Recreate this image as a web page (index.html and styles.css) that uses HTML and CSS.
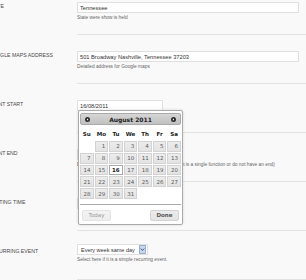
FILE: index.html
```html
<!DOCTYPE html>
<html lang="en">

<head>
    <meta charset="UTF-8">
    <meta name="viewport" content="width=device-width, initial-scale=1.0">
    <title>Edit Show</title>
    <link rel="stylesheet" href="styles.css">
</head>

<body>
    <div class="form">
        <div class="row">
            <div class="label">State</div>
            <div class="field">
                <input class="text wide" type="text" value="Tennessee">
                <p class="desc">State were show is held</p>
            </div>
        </div>

        <div class="row">
            <div class="label">Google Maps Address</div>
            <div class="field">
                <input class="text wide" type="text" value="501 Broadway Nashville, Tennessee 37203">
                <p class="desc">Detailed address for Google maps</p>
            </div>
        </div>

        <div class="row">
            <div class="label">Event Start</div>
            <div class="field">
                <input class="text date" type="text" value="16/08/2011">

                <div class="datepicker">
                    <div class="dp-header">
                        <span class="dp-nav">
                            <svg width="5" height="5" viewBox="0 0 10 10"><circle cx="5" cy="5" r="5" fill="#2b2b2b"/><path d="M6.3 2.6 L3.4 5 L6.3 7.4 Z" fill="#fff"/></svg>
                        </span>
                        <span class="dp-title">August 2011</span>
                        <span class="dp-nav">
                            <svg width="5" height="5" viewBox="0 0 10 10"><circle cx="5" cy="5" r="5" fill="#2b2b2b"/><path d="M3.7 2.6 L6.6 5 L3.7 7.4 Z" fill="#fff"/></svg>
                        </span>
                    </div>

                    <div class="dp-week">
                        <span>Su</span><span>Mo</span><span>Tu</span><span>We</span><span>Th</span><span>Fr</span><span>Sa</span>
                    </div>

                    <div class="dp-days">
                        <span class="empty"></span>
                        <span class="day">1</span><span class="day">2</span><span class="day">3</span><span class="day">4</span><span class="day">5</span><span class="day">6</span>
                        <span class="day">7</span><span class="day">8</span><span class="day">9</span><span class="day">10</span><span class="day">11</span><span class="day">12</span><span class="day">13</span>
                        <span class="day">14</span><span class="day">15</span><span class="day active">16</span><span class="day">17</span><span class="day">18</span><span class="day">19</span><span class="day">20</span>
                        <span class="day">21</span><span class="day">22</span><span class="day">23</span><span class="day">24</span><span class="day">25</span><span class="day">26</span><span class="day">27</span>
                        <span class="day">28</span><span class="day">29</span><span class="day">30</span><span class="day">31</span>
                    </div>

                    <div class="dp-buttons">
                        <span class="dp-btn secondary">Today</span>
                        <span class="dp-btn primary">Done</span>
                    </div>
                </div>
            </div>
        </div>

        <div class="row">
            <div class="label">Event End</div>
            <div class="field">
                <input class="text date" type="text" value="">
                <p class="desc">Date when the event ends, leave blank if the event is a single function or do not have an end)</p>
            </div>
        </div>

        <div class="row">
            <div class="label">Meeting Time</div>
            <div class="field">
                <input class="text time" type="text" value="">
            </div>
        </div>

        <div class="row row-select">
            <div class="label">Recurring Event</div>
            <div class="field">
                <div class="select">
                    <span>Every week same day</span>
                    <svg class="select-arrow" width="7" height="9" viewBox="0 0 7 9">
                        <rect x="0.5" y="0.5" width="6" height="8" fill="#c9d5e8" stroke="#9aaed0"/>
                        <path d="M1.8 3.6 L3.5 5.4 L5.2 3.6" fill="none" stroke="#3c5a8c" stroke-width="1"/>
                    </svg>
                </div>
                <p class="desc">Select here if it is a simple recurring event.</p>
            </div>
        </div>
    </div>
</body>

</html>
```

FILE: styles.css
```css
body {
    margin: 0;
    background-color: #f9f9f9;
    font-family: "Liberation Sans", Arial, sans-serif;
    overflow: hidden;
}

.form {
    margin: -14px 0 0 -12px;
}

.row {
    display: flex;
    height: 49px;
}

.label {
    width: 89px;
    flex-shrink: 0;
    padding-top: 17px;
    font-size: 5.2px;
    text-transform: uppercase;
    color: #4a4a4a;
}

.field {
    flex: 1;
    box-sizing: border-box;
    position: relative;
    padding-top: 16px;
    border-bottom: 1px solid #e2e2e2;
}

.row-select .field {
    padding-top: 13px;
}

.text {
    display: block;
    box-sizing: border-box;
    height: 11px;
    margin: 0;
    padding: 0 2px;
    border: 1px solid #dfdfdf;
    background-color: #fff;
    font-family: "Liberation Sans", Arial, sans-serif;
    font-size: 5.7px;
    color: #333;
    outline: none;
}

.wide {
    width: 222px;
}

.date {
    width: 86px;
}

.time {
    width: 60px;
}

.desc {
    margin: 2px 0 0;
    font-size: 4.8px;
    color: #666;
    white-space: nowrap;
}

.select {
    display: flex;
    align-items: center;
    justify-content: space-between;
    box-sizing: border-box;
    width: 71px;
    height: 11px;
    padding: 0 1px 0 3px;
    border: 1px solid #dfdfdf;
    background-color: #fff;
    font-size: 5.5px;
    color: #333;
}

.select-arrow {
    display: block;
}

/* datepicker */

.datepicker {
    position: absolute;
    z-index: 10;
    left: 1px;
    top: 26px;
    width: 105px;
    box-sizing: border-box;
    padding: 2px 1px 3px;
    border: 1px solid #aaa;
    border-radius: 2px;
    background-color: #fff;
    box-shadow: 0 0 3px rgba(0, 0, 0, 0.15);
    font-family: "DejaVu Sans", Verdana, sans-serif;
}

.dp-header {
    display: flex;
    align-items: center;
    justify-content: space-between;
    box-sizing: border-box;
    height: 12px;
    padding: 0 4px;
    border: 1px solid #aaa;
    border-radius: 2px;
    background: linear-gradient(#d6d6d6, #c0c0c0);
}

.dp-nav svg {
    display: block;
}

.dp-title {
    font-size: 6px;
    font-weight: bold;
    color: #222;
}

.dp-week {
    display: grid;
    grid-template-columns: repeat(7, 1fr);
    column-gap: 1px;
    height: 13px;
    margin-top: 2px;
    align-items: center;
    text-align: center;
    font-size: 5.5px;
    font-weight: bold;
    color: #222;
}

.dp-days {
    display: grid;
    grid-template-columns: repeat(7, 1fr);
    grid-auto-rows: 10.8px;
    gap: 1px;
    margin-top: 1px;
}

.day {
    display: flex;
    align-items: center;
    justify-content: flex-end;
    box-sizing: border-box;
    padding-right: 2px;
    border: 1px solid #d3d3d3;
    background: linear-gradient(#ececec, #e3e3e3);
    font-size: 5.5px;
    color: #5a5a5a;
}

.day.active {
    background: #fff;
    border-color: #aaa;
    color: #212121;
    font-weight: bold;
}

.dp-buttons {
    display: flex;
    justify-content: space-between;
    margin-top: 5px;
    padding: 5px 2px 0;
    border-top: 1px solid #aaa;
}

.dp-btn {
    display: flex;
    align-items: center;
    justify-content: center;
    box-sizing: border-box;
    width: 29px;
    height: 11px;
    border: 1px solid #d3d3d3;
    border-radius: 2px;
    background: linear-gradient(#ececec, #e3e3e3);
    font-size: 5.5px;
    color: #555;
}

.dp-btn.secondary {
    opacity: 0.6;
}

.dp-btn.primary {
    font-weight: bold;
}
```
